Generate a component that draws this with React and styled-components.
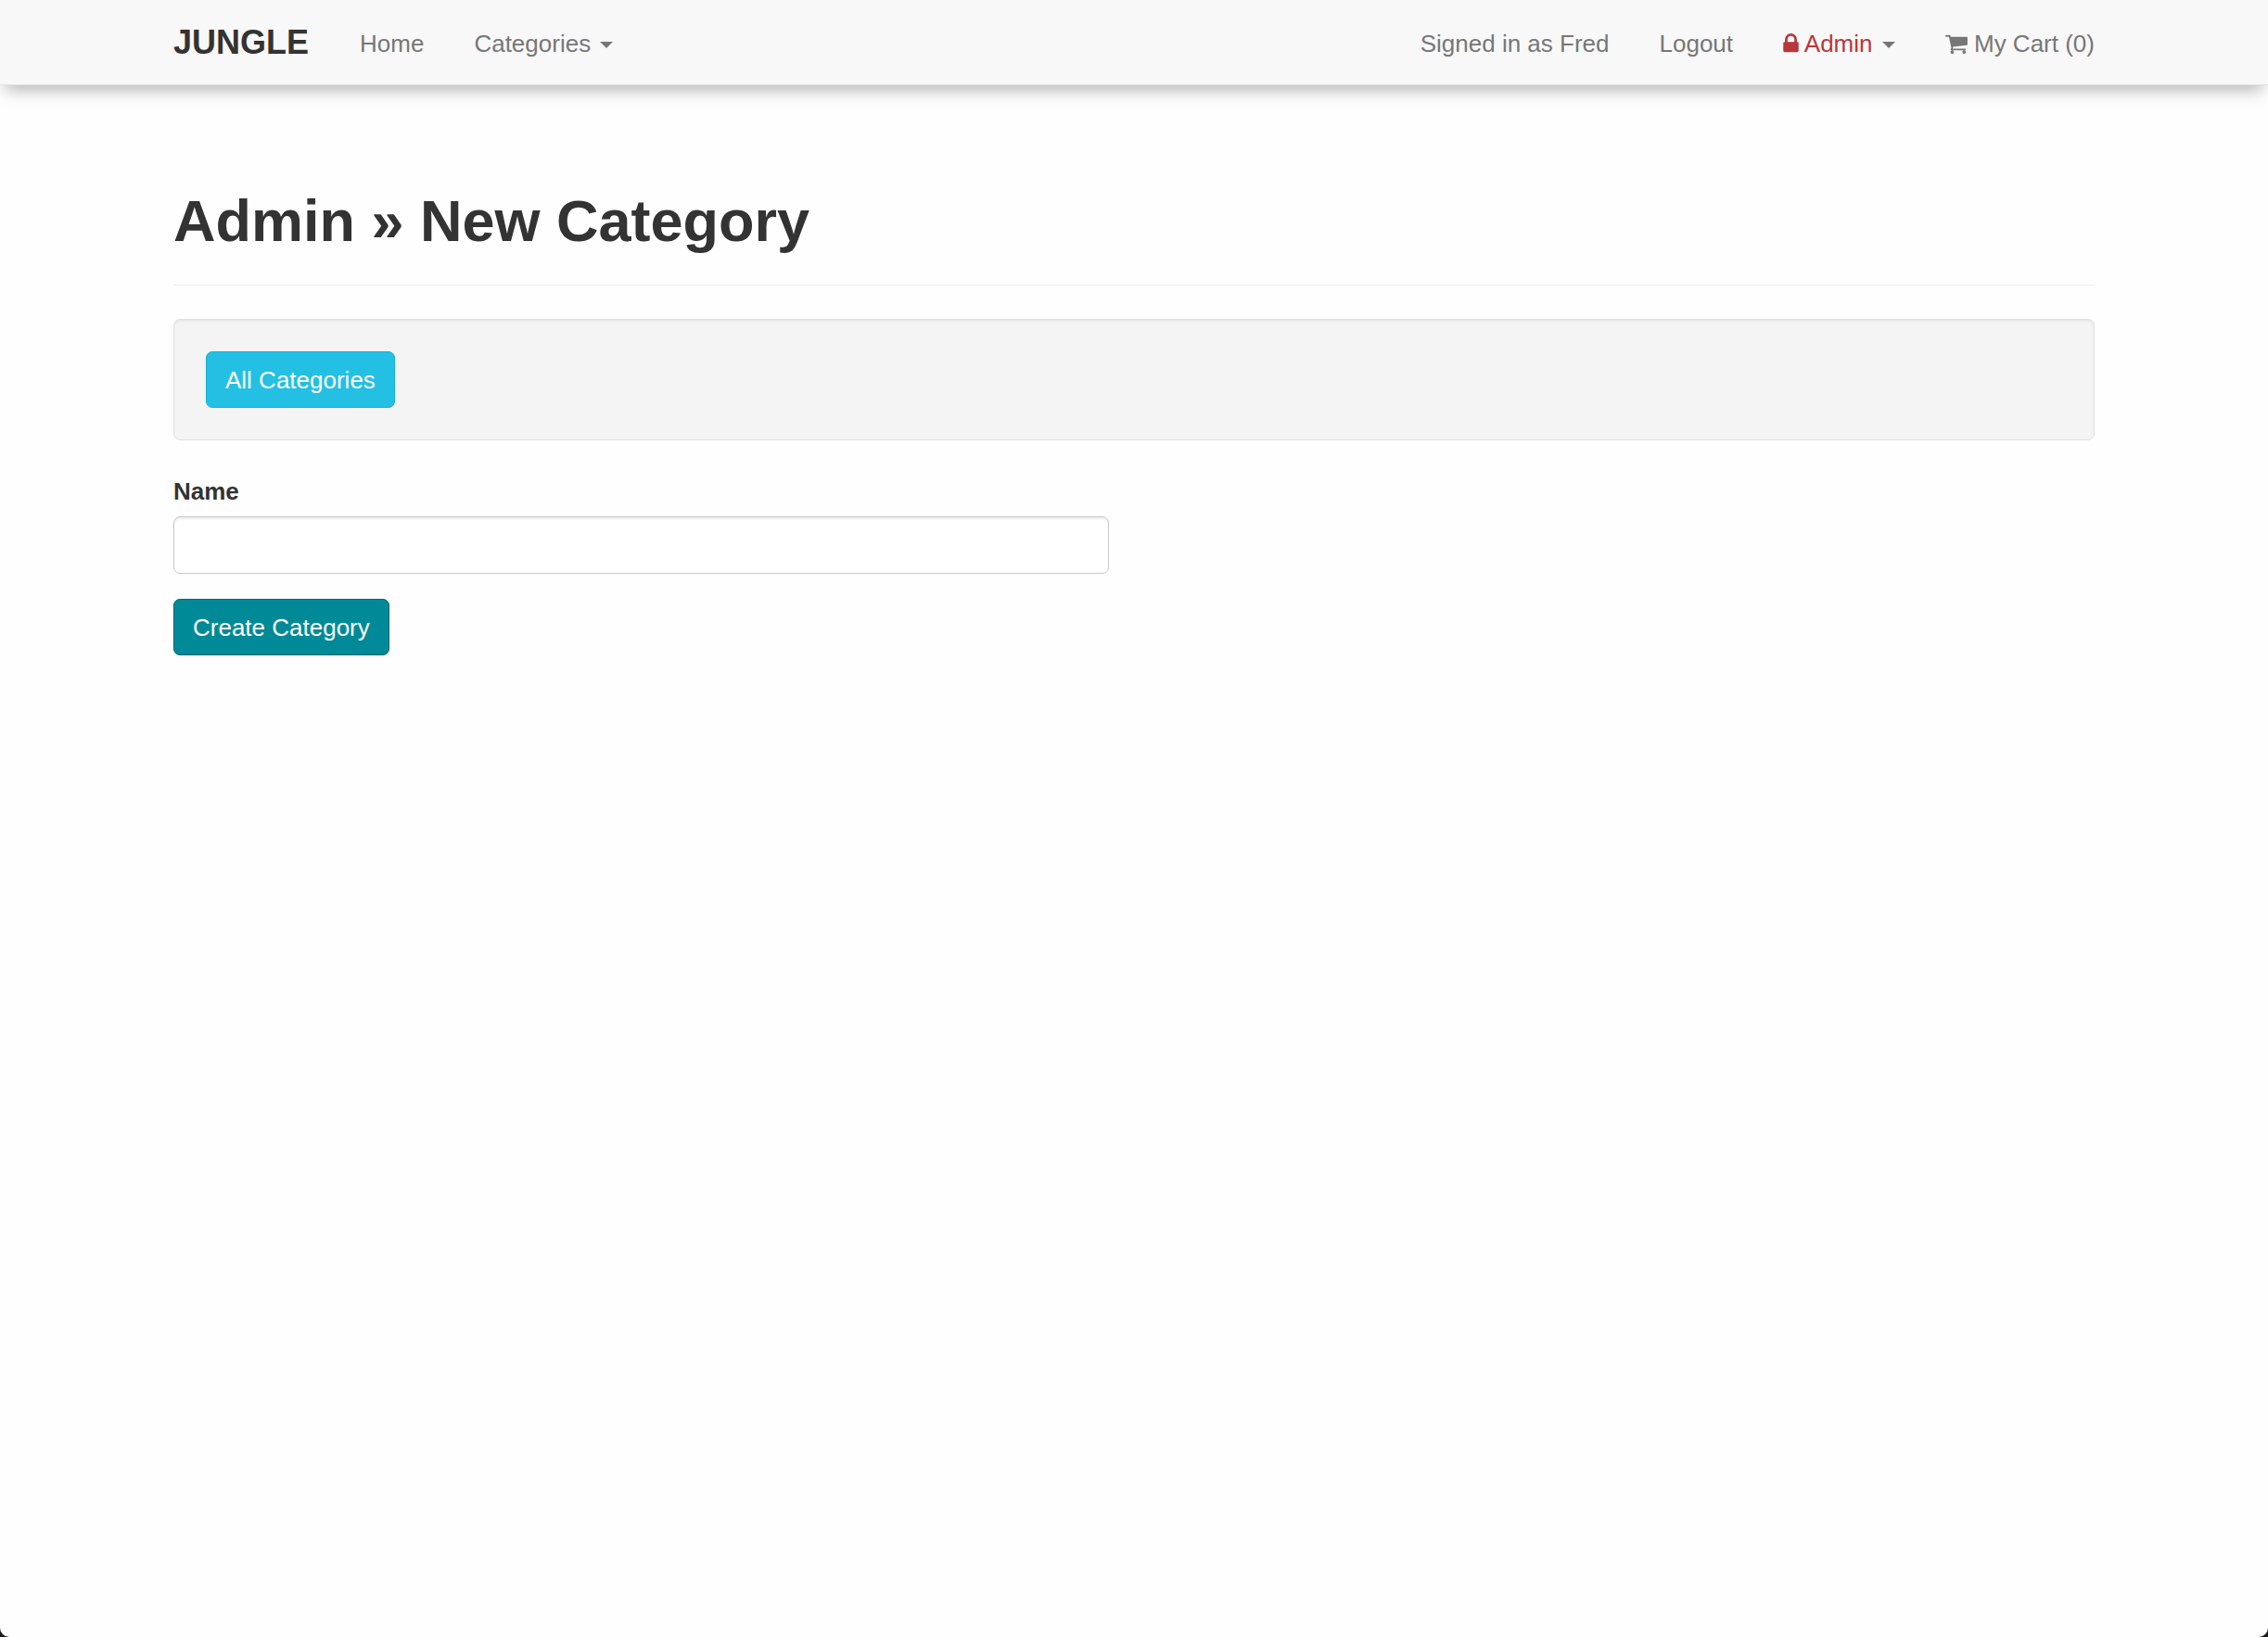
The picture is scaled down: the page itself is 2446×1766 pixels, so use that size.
import React from "react";
import styled, { createGlobalStyle } from "styled-components";

const GlobalStyle = createGlobalStyle`
  *, *::before, *::after { box-sizing: border-box; }
  html { background: #1c1c1c; }
  body {
    margin: 0;
    font-family: "Helvetica Neue", Helvetica, "Liberation Sans", Arial, sans-serif;
    font-size: 26px;
    line-height: 38px;
    color: #333;
  }
`;

const Page = styled.div`
  min-height: 100vh;
  background: #fefefe;
  border-radius: 0 0 10px 10px;
  overflow: hidden;
`;

const Container = styled.div`
  max-width: 2126px;
  margin: 0 auto;
  padding: 0 27px;
`;

const Navbar = styled.nav`
  background: #f8f8f8;
  border-bottom: 1px solid #e3e3e3;
  box-shadow: 0 12px 16px -6px rgba(0, 0, 0, 0.27);
`;

const NavInner = styled(Container)`
  display: flex;
  align-items: center;
  height: 91px;
`;

const Brand = styled.a`
  margin-right: 28px;
  font-size: 36px;
  font-weight: 700;
  color: #333;
  text-decoration: none;
`;

const NavList = styled.ul`
  display: flex;
  margin: 0;
  padding: 2px 0 0;
  list-style: none;

  &:last-child {
    margin-left: auto;
    margin-right: -27px;
  }
`;

const NavItem = styled.li`
  padding: 0 27px;
  color: #777;
  white-space: nowrap;
`;

const NavLink = styled.a`
  color: inherit;
  text-decoration: none;
`;

const Danger = styled.span`
  color: #b8373b;
`;

const Caret = styled.span`
  display: inline-block;
  margin-left: 3px;
  vertical-align: middle;
  border-top: 7px solid currentColor;
  border-left: 7px solid transparent;
  border-right: 7px solid transparent;
`;

const Icon = styled.svg`
  height: 22px;
  width: ${(p) => p.$width}px;
  vertical-align: -2px;
  fill: currentColor;
`;

const Main = styled(Container).attrs({ as: "main" })`
  padding-top: 110px;
`;

const PageHeader = styled.header`
  padding-bottom: 33px;
  margin-bottom: 36px;
  border-bottom: 1px solid #eee;
`;

const Title = styled.h1`
  margin: 0;
  font-size: 63px;
  line-height: 72px;
  font-weight: 700;
`;

const Well = styled.section`
  display: flex;
  margin-bottom: 36px;
  padding: 34px;
  background: #f4f4f4;
  border: 1px solid #e1e1e1;
  border-radius: 7px;
  box-shadow: inset 0 2px 2px rgba(0, 0, 0, 0.05);
`;

const Button = styled.button`
  display: inline-block;
  padding: 11px 20px 10px;
  font: inherit;
  color: #fff;
  text-decoration: none;
  background: ${(p) => (p.$info ? "#23c0e3" : "#008a97")};
  border: 1px solid ${(p) => (p.$info ? "#12b3d6" : "#00666f")};
  border-radius: 7px;
  cursor: pointer;
`;

const Form = styled.form`
  width: calc(50% - 27px);
`;

const Field = styled.div`
  margin-bottom: 27px;
`;

const Label = styled.label`
  display: block;
  margin-bottom: 8px;
  font-weight: 700;
`;

const TextInput = styled.input`
  display: block;
  width: 100%;
  height: 62px;
  padding: 11px 22px;
  font: inherit;
  color: #555;
  background: #fff;
  border: 1px solid #c8c8c8;
  border-radius: 7px;
  box-shadow: inset 0 2px 2px rgba(0, 0, 0, 0.075);
`;

const LockIcon = () => (
  <Icon $width={17} viewBox="320 128 1152 1536" aria-hidden="true">
    <path d="M640 768h512v-192q0-106-75-181t-181-75-181 75-75 181v192zm832 96v576q0 40-28 68t-68 28h-960q-40 0-68-28t-28-68v-576q0-40 28-68t68-28h32v-192q0-184 132-316t316-132 316 132 132 316v192h32q40 0 68 28t28 68z" />
  </Icon>
);

const CartIcon = () => (
  <Icon $width={24} viewBox="64 128 1664 1536" aria-hidden="true">
    <path d="M704 1536q0 52-38 90t-90 38-90-38-38-90 38-90 90-38 90 38 38 90zm896 0q0 52-38 90t-90 38-90-38-38-90 38-90 90-38 90 38 38 90zm128-1088v512q0 24-16.500 42.500t-40.500 21.500l-1044 122q13 60 13 70 0 16-24 64h920q26 0 45 19t19 45-19 45-45 19h-1024q-26 0-45-19t-19-45q0-11 8-31.500t16-36 21.500-40 15.500-29.500l-177-823h-204q-26 0-45-19t-19-45 19-45 45-19h256q16 0 28.500 6.500t19.500 15.500 13 24.500 8 26 5.500 29.500 4.500 26h1201q26 0 45 19t19 45z" />
  </Icon>
);

export default function App() {
  return (
    <>
      <GlobalStyle />
      <Page>
        <Navbar>
          <NavInner>
            <Brand href="#">JUNGLE</Brand>
            <NavList>
              <NavItem>
                <NavLink href="#home">Home</NavLink>
              </NavItem>
              <NavItem>
                <NavLink href="#categories">
                  Categories <Caret />
                </NavLink>
              </NavItem>
            </NavList>
            <NavList>
              <NavItem>Signed in as Fred</NavItem>
              <NavItem>
                <NavLink href="#logout">Logout</NavLink>
              </NavItem>
              <NavItem>
                <NavLink href="#admin">
                  <Danger>
                    <LockIcon /> Admin
                  </Danger>{" "}
                  <Caret />
                </NavLink>
              </NavItem>
              <NavItem>
                <NavLink href="#cart">
                  <CartIcon /> My Cart (0)
                </NavLink>
              </NavItem>
            </NavList>
          </NavInner>
        </Navbar>

        <Main>
          <PageHeader>
            <Title>Admin » New Category</Title>
          </PageHeader>
          <Well>
            <Button as="a" href="#all-categories" $info>
              All Categories
            </Button>
          </Well>
          <Form onSubmit={(e) => e.preventDefault()}>
            <Field>
              <Label htmlFor="category-name">Name</Label>
              <TextInput id="category-name" type="text" />
            </Field>
            <Button type="submit">Create Category</Button>
          </Form>
        </Main>
      </Page>
    </>
  );
}
